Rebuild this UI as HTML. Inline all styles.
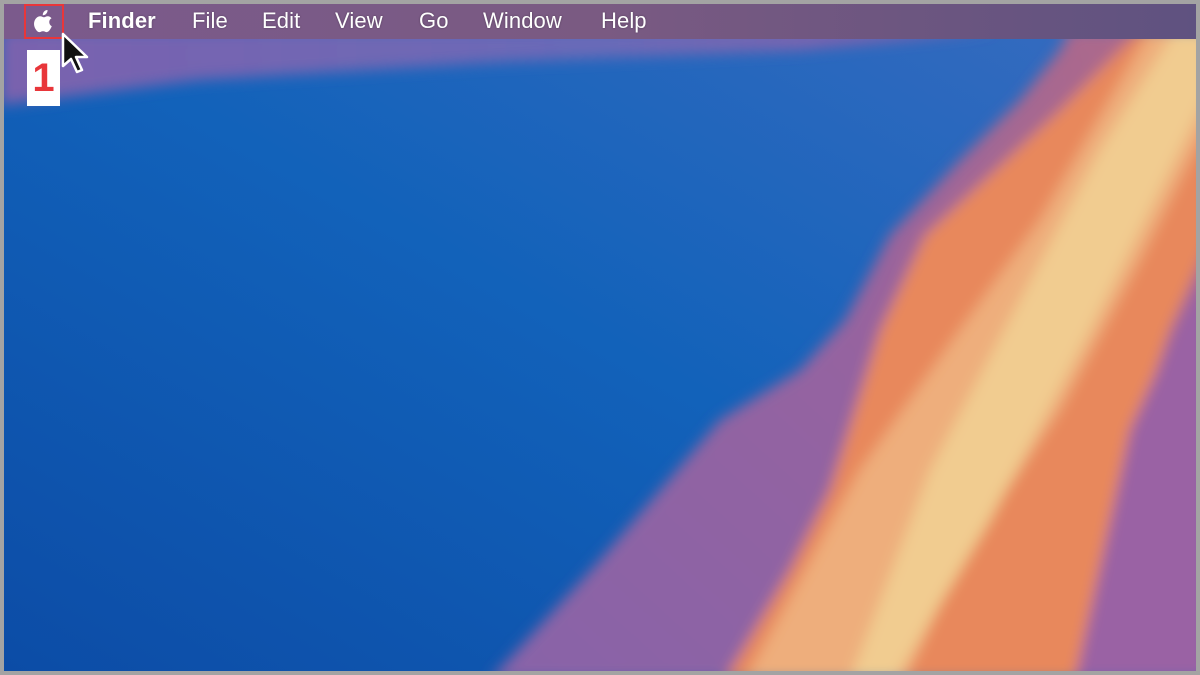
<!DOCTYPE html>
<html><head><meta charset="utf-8"><style>
html,body{margin:0;padding:0;overflow:hidden;width:1200px;height:675px;}
body{background:#a3a3a3;position:relative;font-family:"Liberation Sans",sans-serif;}
#scr{position:absolute;left:4px;top:4px;width:1192px;height:667px;overflow:hidden;}
#bar{position:absolute;left:0;top:0;width:1192px;height:35px;background:linear-gradient(90deg,#7b5a8c,#7a5a82 50%,#6a5580 80%,#5f5280);}
.m{position:absolute;top:3px;color:#fff;font-size:22px;line-height:28px;letter-spacing:0.1px;text-shadow:0 0 2px rgba(0,0,0,.3);}
</style></head><body>
<div id="scr">
<svg width="1192" height="667" viewBox="4 4 1192 667" style="position:absolute;left:0;top:0;display:block">
<defs>
<filter id="b" x="-10%" y="-10%" width="120%" height="120%"><feGaussianBlur stdDeviation="7"/></filter>
<linearGradient id="blue" x1="0" y1="1" x2="1" y2="0">
<stop offset="0" stop-color="#0c4ca6"/><stop offset="0.5" stop-color="#1262ba"/><stop offset="1" stop-color="#3a6cc0"/></linearGradient>
<linearGradient id="pur" x1="0" y1="1" x2="1" y2="0">
<stop offset="0" stop-color="#8863a8"/><stop offset="0.5" stop-color="#9563a0"/><stop offset="1" stop-color="#b06a88"/></linearGradient>
<linearGradient id="top" x1="0" y1="0" x2="1" y2="0">
<stop offset="0" stop-color="#7a62ae"/><stop offset="0.6" stop-color="#6a6ab8"/><stop offset="1" stop-color="#8a60a8"/></linearGradient>
</defs>
<rect x="0" y="0" width="1200" height="675" fill="url(#blue)"/>
<g filter="url(#b)">
<polygon points="0,30 1000,30 800,50 500,62 200,80 0,105" fill="url(#top)"/>
<polygon points="490,680 600,560 720,420 800,370 845,320 890,235 960,160 1020,100 1060,50 1070,30 1210,30 1210,680" fill="url(#pur)"/>
<polygon points="725,680 790,570 830,490 880,330 925,235 1060,110 1140,30 1210,30 1210,240 1170,330 1140,420 1075,680" fill="#e8885c"/>
<polygon points="1075,680 1130,430 1175,330 1210,260 1210,680" fill="#9a62a4"/>
<polygon points="745,680 860,470 960,330 1040,220 1150,30 1210,30 1210,120 1140,260 1060,410 960,560 905,680" fill="#eeae7c"/>
<polygon points="850,680 895,680 990,520 1090,330 1170,170 1210,90 1210,30 1175,30 1100,150 1020,300 930,470" fill="#f1cc90"/>
</g>
</svg>
<div id="bar">
<svg style="position:absolute;left:30px;top:5px" width="20" height="24" viewBox="0 0 20 24"><path d="M13.5 1c.2 1.6-.5 3-1.4 3.9-.9.9-2.2 1.5-3.300 1.4-.2-1.4.5-2.9 1.3-3.8.9-1 2.4-1.6 3.4-1.5zM17.8 17.3c-.5 1.2-.8 1.7-1.4 2.7-.9 1.4-2.2 3.1-3.7 3.1-1.4 0-1.8-.9-3.7-.9-1.9 0-2.3.9-3.7.9-1.6 0-2.8-1.6-3.7-3C-.9 16.4-.3 11.3 2.6 8.8 3.6 7.9 5 7.3 6.2 7.3c1.5 0 2.6 1 3.8 1 1.2 0 1.900-1 3.800-1 1.3 0 2.7.7 3.7 1.9-3.3 1.8-2.8 6.5.3 8.1z" fill="#fff"/></svg>
<div class="m" style="left:84px;font-weight:bold">Finder</div>
<div class="m" style="left:188px">File</div>
<div class="m" style="left:258px">Edit</div>
<div class="m" style="left:331px">View</div>
<div class="m" style="left:415px">Go</div>
<div class="m" style="left:479px">Window</div>
<div class="m" style="left:597px">Help</div>
</div>
<div style="position:absolute;left:20px;top:0;width:36px;height:31px;border:2px solid #e8363a;"></div>
<div style="position:absolute;left:23px;top:46px;width:33px;height:56px;background:#fff;color:#e8363a;font-weight:bold;font-size:40px;line-height:56px;text-align:center;">1</div>
<svg style="position:absolute;left:56px;top:28px" width="34" height="46" viewBox="0 0 34 46"><path d="M3 2 L3 34 L11 27 L17 40 L22 38 L16 25 L27 25 Z" fill="#111" stroke="#fff" stroke-width="2.5" stroke-linejoin="round"/></svg>
</div>
</body></html>
